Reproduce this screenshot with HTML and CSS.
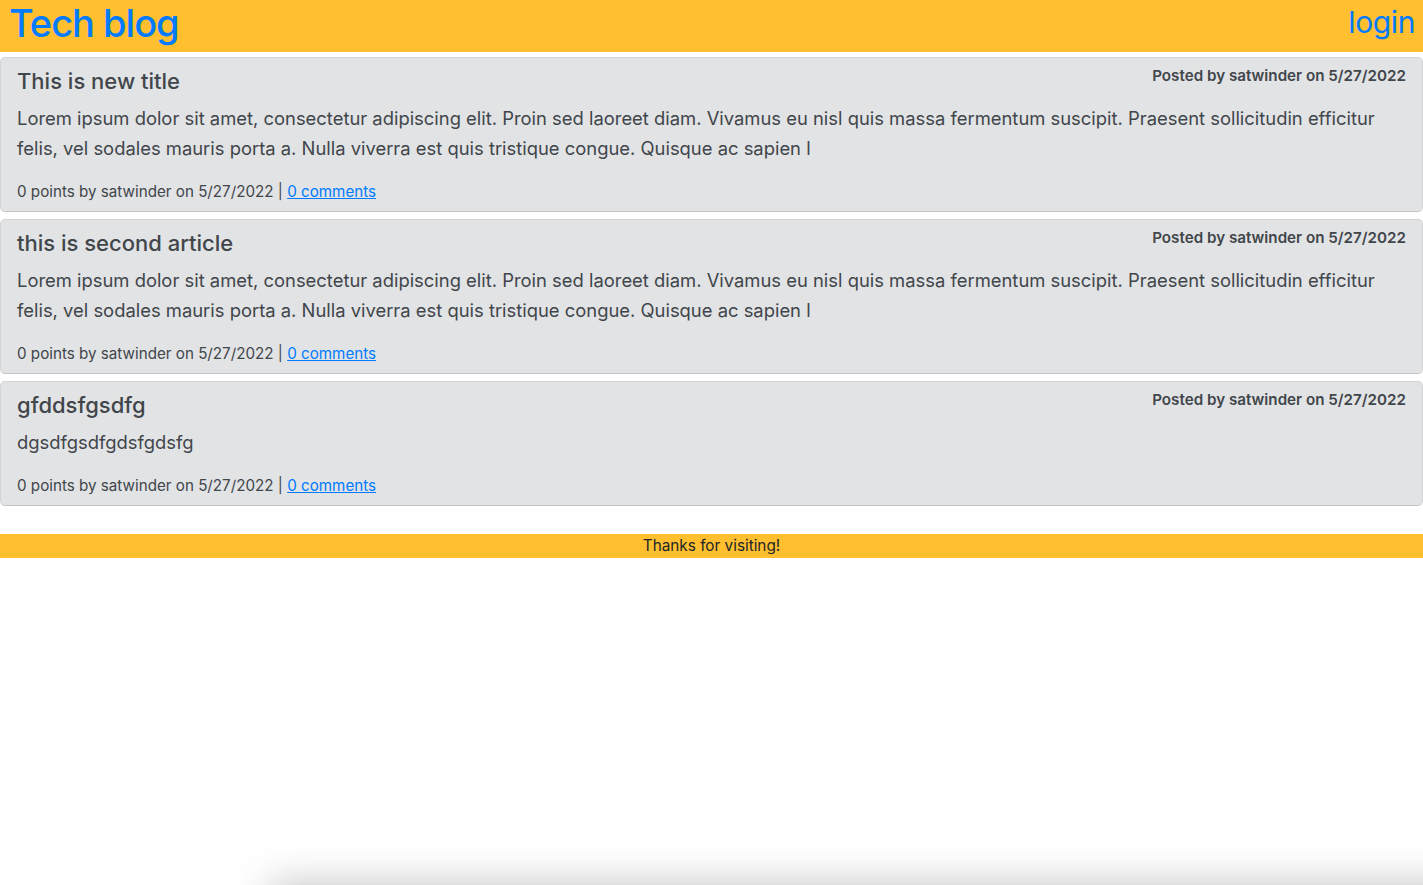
FILE: index.html
```html
<!DOCTYPE html>
<html lang="en">
<head>
<meta charset="utf-8">
<title>Tech blog</title>
<link rel="stylesheet" href="styles.css">
</head>
<body>
<header class="site-header">
  <a class="brand" href="#">Tech blog</a>
  <a class="login" href="#">login</a>
</header>
<main class="posts">
  <article class="post">
    <div class="post-head">
      <h2 class="post-title">This is new title</h2>
      <span class="post-by">Posted by satwinder on 5/27/2022</span>
    </div>
    <p class="post-body">Lorem ipsum dolor sit amet, consectetur adipiscing elit. Proin sed laoreet diam. Vivamus eu nisl quis massa fermentum suscipit. Praesent sollicitudin efficitur felis, vel sodales mauris porta a. Nulla viverra est quis tristique congue. Quisque ac sapien l</p>
    <div class="post-meta">0 points by satwinder on 5/27/2022 | <a href="#">0 comments</a></div>
  </article>
  <article class="post">
    <div class="post-head">
      <h2 class="post-title">this is second article</h2>
      <span class="post-by">Posted by satwinder on 5/27/2022</span>
    </div>
    <p class="post-body">Lorem ipsum dolor sit amet, consectetur adipiscing elit. Proin sed laoreet diam. Vivamus eu nisl quis massa fermentum suscipit. Praesent sollicitudin efficitur felis, vel sodales mauris porta a. Nulla viverra est quis tristique congue. Quisque ac sapien l</p>
    <div class="post-meta">0 points by satwinder on 5/27/2022 | <a href="#">0 comments</a></div>
  </article>
  <article class="post">
    <div class="post-head">
      <h2 class="post-title">gfddsfgsdfg</h2>
      <span class="post-by">Posted by satwinder on 5/27/2022</span>
    </div>
    <p class="post-body">dgsdfgsdfgdsfgdsfg</p>
    <div class="post-meta">0 points by satwinder on 5/27/2022 | <a href="#">0 comments</a></div>
  </article>
</main>
<footer class="site-footer">Thanks for visiting!</footer>
<div class="window-shadow"></div>
</body>
</html>
```
FILE: styles.css
```css
* { box-sizing: border-box; }
html, body { margin: 0; padding: 0; }
body {
  font-family: Inter, "Noto Sans", "Liberation Sans", sans-serif;
  font-size: 16px;
  line-height: 1.5;
  color: #212529;
  background: #fff;
  overflow: hidden;
}
a { color: #007bff; }
.site-header {
  height: 52px;
  background: #ffbf2f;
  display: flex;
  justify-content: space-between;
  align-items: flex-start;
  padding: 0 8px 0 9px;
}
.brand {
  font-size: 38px;
  line-height: 46px;
  font-weight: 500;
  letter-spacing: -1px;
  color: #007bff;
  text-decoration: none;
}
.login {
  font-size: 30px;
  line-height: 44px;
  font-weight: 400;
  letter-spacing: -0.4px;
  color: #007bff;
  text-decoration: none;
}
.posts {
  display: flex;
  flex-direction: column;
  gap: 7px;
  margin-top: 5px;
}
.post {
  background: #e2e3e5;
  color: #41464b;
  border: 1px solid #d3d4d6;
  border-bottom-color: #c4c5c7;
  border-radius: 5px;
  padding: 8px 16px 7px;
}
.post-head {
  display: flex;
  justify-content: space-between;
  align-items: flex-start;
}
.post-title {
  margin: 0 0 7px;
  padding-top: 1px;
  font-size: 22px;
  line-height: 29px;
  font-weight: 500;
}
.post-by {
  font-size: 15.2px;
  line-height: 20px;
  font-weight: 600;
}
.post-body {
  margin: 0 0 17px;
  font-size: 18.4px;
  line-height: 30px;
  font-weight: 400;
}
.post-meta {
  font-size: 15.2px;
  line-height: 24px;
}
.site-footer {
  margin-top: 28px;
  background: #ffbf2f;
  height: 24px;
  line-height: 24px;
  text-align: center;
  font-size: 15.3px;
  color: #212529;
}
.window-shadow {
  position: fixed;
  left: 270px;
  right: -40px;
  top: 885px;
  height: 60px;
  box-shadow: 0 0 40px rgba(0, 0, 0, 0.25);
  background: #fff;
}
```
